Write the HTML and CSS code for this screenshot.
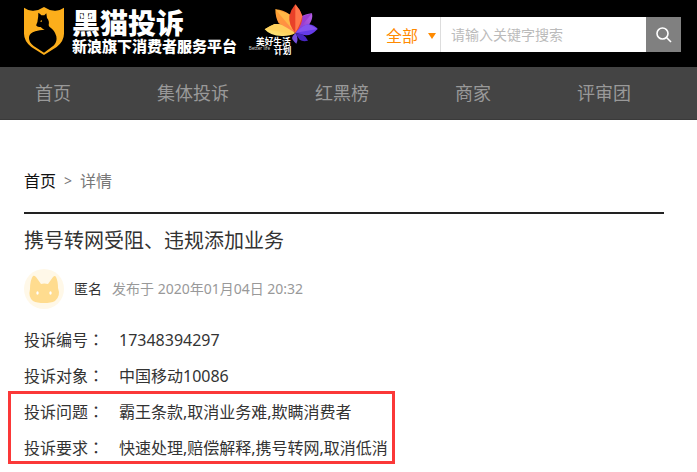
FILE: index.html
```html
<!DOCTYPE html>
<html lang="zh-CN">
<head>
<meta charset="utf-8">
<meta name="viewport" content="width=device-width, initial-scale=1">
<title>黑猫投诉</title>
<link rel="stylesheet" href="styles.css">
</head>
<body>
<header class="header">
  <a class="brand" href="#">
    <svg class="shield" viewBox="0 0 120 144" aria-hidden="true">
      <path fill="#fcae1b" d="M0 2 Q14 12 28 11 Q46 10 60 0 Q74 10 92 11 Q106 12 120 2 V80 Q120 102 98 120 L60 144 L22 120 Q0 102 0 80Z"/>
      <path fill="#000" d="M43 17 Q49 20 52 25 Q57 24 61 25 L67 19 L69 33 Q77 42 74 54 Q74 58 78 61 Q92 70 97 88 Q100 104 90 115 L60 137 L29 117 Q13 104 15 90 Q17 78 34 73 Q47 69 62 68 Q56 66 50 60 Q42 61 38 57 Q35 55 38 50 Q41 45 41 39 Q43 31 43 17Z"/>
      <path fill="#fcae1b" d="M48 43 L54 39 L53 45Z"/>
    </svg>
    <span class="brand-text">
      <span class="brand-name">黑猫投诉</span>
      <span class="brand-tag">新浪旗下消费者服务平台</span>
    </span>
  </a>
  <a class="campaign" href="#">
    <svg class="flower" viewBox="0 0 213 165" role="img" aria-label="美好生活计划">
      <defs>
        <linearGradient id="gold" x1="0" y1="1" x2="1" y2="0"><stop stop-color="#fff08a"/><stop offset="1" stop-color="#fcb52f"/></linearGradient>
        <linearGradient id="orange" x1="0" y1="0" x2="1" y2="1"><stop stop-color="#ffa22f"/><stop offset="1" stop-color="#ff8354"/></linearGradient>
        <linearGradient id="violet" x1="0" y1="1" x2="1" y2="0"><stop stop-color="#852bc0"/><stop offset="1" stop-color="#b863e9"/></linearGradient>
      </defs>
      <path fill="url(#gold)" d="M141 91 Q119 60 80 63 Q65 68 50 79 Q66 98 101 99 Q125 100 141 91Z"/>
      <path fill="#ffd15e" d="M50 79 L141 91 Q119 60 80 63Z"/>
      <path fill="url(#orange)" d="M142 90 Q141 49 124 34 Q106 21 82 19 Q82 43 92 61 Q113 72 142 90Z"/>
      <path fill="#ffb747" d="M82 19 L142 90 Q141 49 124 34Z"/>
      <path fill="url(#violet)" d="M144 89 Q138 58 158 42 Q171 33 192 31 Q196 48 183 65 Q172 79 144 89Z"/>
      <path fill="#9a3dcf" d="M192 31 L144 89 Q138 58 158 42Z"/>
      <path fill="#e94129" d="M142 90 Q121 65 124 39 Q129 19 142 4 Q157 20 163 39 Q165 64 142 90Z"/>
      <path fill="#ff7649" d="M142 4 V90 Q158 62 163 39 Q157 20 142 4Z"/>
      <path fill="#653be8" d="M143 89 Q163 66 182 64 Q200 66 209 78 Q190 98 174 97 Q158 96 143 89Z"/>
      <path fill="#8552ef" d="M209 78 L143 89 Q163 66 182 64Z"/>
      <path fill="#4726bf" d="M143 90 Q170 90 180 113 Q164 117 155 110 Q146 100 143 90Z"/>
      <path fill="#7651df" d="M143 90 Q128 103 134 110 Q139 117 145 122 Q153 109 143 90Z"/>
      <text class="flower-title" x="24" y="125">美好生活</text>
      <text class="flower-title" x="78" y="154">计划</text>
      <text class="flower-note" x="2" y="141">Better life</text>
    </svg>
  </a>
  <form class="search" role="search">
    <span class="scope">
      <select aria-label="搜索范围"><option>全部</option></select>
      <span class="arrow"></span>
    </span>
    <input type="text" aria-label="搜索关键字" placeholder="请输入关键字搜索">
    <button type="button" aria-label="搜索">
      <svg viewBox="0 0 16 16" aria-hidden="true"><circle cx="6.5" cy="6.5" r="5.5"/><path d="M10.5 10.5 L15 15"/></svg>
    </button>
  </form>
</header>
<nav class="nav">
  <a href="#">首页</a>
  <a href="#">集体投诉</a>
  <a href="#">红黑榜</a>
  <a href="#">商家</a>
  <a href="#">评审团</a>
</nav>
<main class="main">
  <div class="crumbs"><a href="#">首页</a><span class="sep">&gt;</span><span>详情</span></div>
  <h1 class="title">携号转网受阻、违规添加业务</h1>
  <div class="author">
    <svg class="avatar" viewBox="0 0 40 40" aria-hidden="true">
      <circle cx="20" cy="20" r="20" fill="#fff8e8"/>
      <path fill="#ffdc8f" d="M9 7 Q10 6 12 8 L17 15 Q20 14 24 15 L29 8 Q31 6 32 8 Q34 12 34 19 Q37 27 31 32 Q27 34 20 34 Q13 34 9 32 Q4 28 6 20 Q6 11 9 7Z"/>
      <ellipse cx="13.500" cy="24" rx="1.200" ry="1.800" fill="#fff"/>
      <ellipse cx="26.500" cy="24" rx="1.200" ry="1.800" fill="#fff"/>
    </svg>
    <span class="name">匿名</span>
    <span class="date">发布于 2020年01月04日 20:32</span>
  </div>
  <dl class="fields">
    <div class="row"><dt>投诉编号<span class="colon" lang="zh-TW">：</span></dt><dd>17348394297</dd></div>
    <div class="row"><dt>投诉对象<span class="colon" lang="zh-TW">：</span></dt><dd>中国移动10086</dd></div>
  </dl>
  <dl class="fields marked">
    <div class="row"><dt>投诉问题<span class="colon" lang="zh-TW">：</span></dt><dd>霸王条款,取消业务难,欺瞒消费者</dd></div>
    <div class="row"><dt>投诉要求<span class="colon" lang="zh-TW">：</span></dt><dd>快速处理,赔偿解释,携号转网,取消低消</dd></div>
  </dl>
</main>
</body>
</html>
```
FILE: styles.css
```css
* { box-sizing: border-box; }

body {
  margin: 0;
  background: #fff;
  color: #333;
  font: 16px/36px "Noto Sans", "Noto Sans CJK SC", sans-serif;
}

a { color: inherit; text-decoration: none; }

.header {
  display: flex;
  align-items: flex-start;
  height: 67px;
  padding: 0 16px 0 24px;
  background: #000;
}

.brand { display: flex; gap: 8px; padding-top: 7px; color: #fff; }
.shield { width: 40px; height: 48px; }
.brand-text { display: flex; flex-direction: column; font-family: "Noto Sans CJK SC", sans-serif; font-weight: 900; white-space: nowrap; }
.brand-name { font-size: 28px; line-height: 30px; }
.brand-tag { font-size: 15px; line-height: 18px; }

.campaign { margin-left: 11px; padding-top: 3px; }
.flower { display: block; width: 71px; height: 55px; }
.flower-title { fill: #fff; font: 700 26px "Noto Sans CJK SC", sans-serif; }
.flower-note { fill: #ccc; font: 14px "Noto Sans", sans-serif; }

.search { display: flex; flex: 0 1 310px; height: 35px; margin: 17px 0 0 auto; background: #fff; }
.scope { position: relative; flex: 0 0 70px; border-right: 1px solid #ddd; }
.scope select {
  width: 100%;
  height: 100%;
  padding: 0 0 0 15px;
  border: 0;
  appearance: none;
  background: transparent;
  color: #ff8a00;
  font: 16px "Noto Sans CJK SC", sans-serif;
}
.arrow {
  position: absolute;
  top: 16px;
  right: 4px;
  border: 4px solid transparent;
  border-top: 6px solid #ff8a00;
  border-bottom: 0;
  pointer-events: none;
}
.search input {
  flex: 1;
  min-width: 0;
  padding: 0 10px 2px;
  border: 0;
  background: transparent;
  font: 14px "Noto Sans CJK SC", sans-serif;
}
.search input::placeholder { color: #bbb; }
.search button {
  display: grid;
  place-items: center;
  flex: 0 0 35px;
  padding: 0;
  border: 0;
  background: #808080;
}
.search button svg { width: 16px; height: 16px; fill: none; stroke: #fff; stroke-width: 1.6; }

.nav {
  display: flex;
  gap: 86px;
  height: 53px;
  padding-left: 35px;
  border-bottom: 1px solid #3a3a3a;
  background: #444;
  color: #999;
  font-size: 18px;
  line-height: 52px;
  white-space: nowrap;
}

.main { padding: 43px 33px 8px 24px; }

.crumbs { display: flex; height: 51px; border-bottom: 2px solid #222; color: #777; }
.crumbs a { color: #111; }
.sep { padding: 0 8px; font-size: 14px; }

.title { margin: 9px 0 10px; font-size: 20px; font-weight: 400; line-height: 36px; }

.author { display: flex; align-items: center; height: 40px; margin-bottom: 18px; font-size: 14px; }
.avatar { width: 40px; height: 40px; }
.name { margin: 0 10px; }
.date { color: #999; }

.fields { display: grid; gap: 10px; margin: 0; line-height: 26px; }
.row { display: flex; height: 26px; }
.row dt { flex: 0 0 95px; }
.row dd { margin: 0; }
.colon { font-family: "Noto Sans CJK TC", sans-serif; line-height: 1; }
.marked {
  width: fit-content;
  margin: 2px 0 0 -16px;
  padding: 5px 4px 0 13px;
  border: 3px solid #fb3838;
}
```
